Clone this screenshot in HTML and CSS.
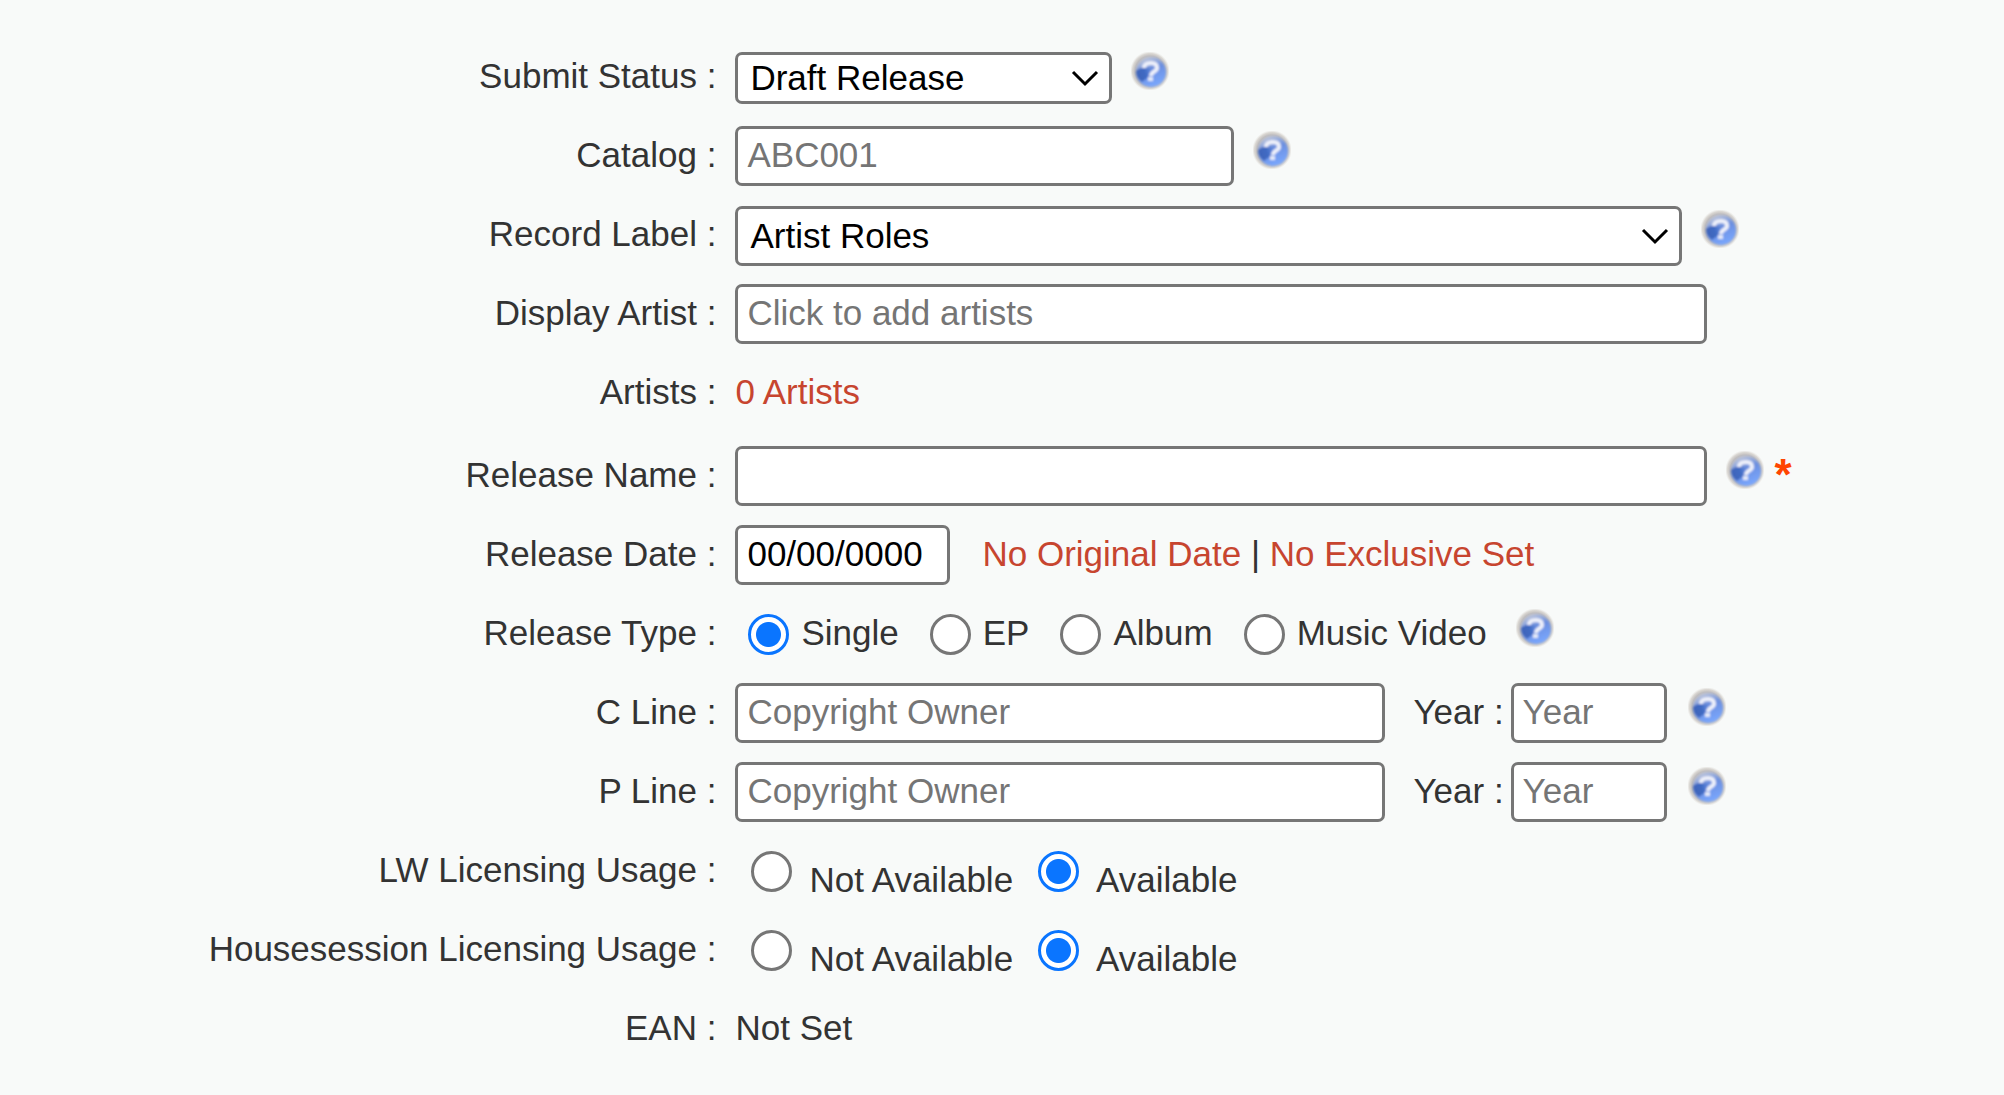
FILE: index.html
```
<!DOCTYPE html>
<html lang="en">
<head>
    <meta charset="UTF-8">
    <meta name="viewport" content="width=device-width, initial-scale=1.0">
    <title>Release Details</title>
    <link rel="stylesheet" href="styles.css">
</head>
<body>
    <!-- Shared icons -->
    <svg class="sprite" aria-hidden="true">
        <defs>
            <radialGradient id="rim">
                <stop offset="0.75" stop-color="#bfbcbc"/>
                <stop offset="0.88" stop-color="#d3cfca" stop-opacity="0.8"/>
                <stop offset="1" stop-color="#e6e3df" stop-opacity="0"/>
            </radialGradient>
            <linearGradient id="ball" x1="0.2" y1="0" x2="0.6" y2="1">
                <stop offset="0" stop-color="#cbcfdb"/>
                <stop offset="0.45" stop-color="#6c8fdf"/>
                <stop offset="1" stop-color="#7aa8ff"/>
            </linearGradient>
            <linearGradient id="shade" x1="0" y1="0.6" x2="1" y2="0.4">
                <stop offset="0" stop-color="#3d62b8"/>
                <stop offset="0.5" stop-color="#416bc4"/>
                <stop offset="1" stop-color="#5c87e0" stop-opacity="0"/>
            </linearGradient>
            <filter id="soft">
                <feGaussianBlur stdDeviation="0.8"/>
            </filter>
        </defs>
        <symbol id="help" viewBox="0 0 38 38">
            <circle cx="19" cy="19" r="20" fill="url(#rim)"/>
            <g filter="url(#soft)">
                <circle cx="20" cy="20" r="15" fill="url(#ball)"/>
                <path d="M5 19c5-5 12-3 20-3-2 6-8 9-14 14-4-3-6-7-6-11z" fill="url(#shade)"/>
                <path d="M13 16c0-4 3-5 7-5 4 0 6 2 6 5 0 4-6 3-6 8" fill="none" stroke="#eef0fa" stroke-width="4"/>
                <path d="M17 25h5v4h-5z" fill="#e4e9f8"/>
            </g>
        </symbol>
        <symbol id="chevron" viewBox="0 0 28 18">
            <path d="M2 3l12 12L26 3" fill="none" stroke="#000" stroke-width="3"/>
        </symbol>
    </svg>

    <form class="release-form">
        <div class="row">
            <label class="name" for="status">Submit Status :</label>
            <div class="field">
                <div class="select short">
                    <select id="status"><option>Draft Release</option></select>
                    <svg class="arrow"><use href="#chevron"/></svg>
                </div>
                <svg class="help"><use href="#help"/></svg>
            </div>
        </div>
        <div class="row">
            <label class="name" for="catalog">Catalog :</label>
            <div class="field">
                <input type="text" id="catalog" class="catalog" placeholder="ABC001">
                <svg class="help"><use href="#help"/></svg>
            </div>
        </div>
        <div class="row">
            <label class="name" for="recordLabel">Record Label :</label>
            <div class="field">
                <div class="select long">
                    <select id="recordLabel"><option>Artist Roles</option></select>
                    <svg class="arrow"><use href="#chevron"/></svg>
                </div>
                <svg class="help"><use href="#help"/></svg>
            </div>
        </div>
        <div class="row">
            <label class="name" for="displayArtist">Display Artist :</label>
            <div class="field">
                <input type="text" id="displayArtist" class="wide" placeholder="Click to add artists">
            </div>
        </div>
        <div class="row artists">
            <span class="name">Artists :</span>
            <div class="field">
                <a href="#" class="text">0 Artists</a>
            </div>
        </div>
        <div class="row">
            <label class="name" for="releaseName">Release Name :</label>
            <div class="field">
                <input type="text" id="releaseName" class="wide" required>
                <svg class="help"><use href="#help"/></svg>
                <span class="required">*</span>
            </div>
        </div>
        <div class="row">
            <label class="name" for="releaseDate">Release Date :</label>
            <div class="field">
                <input type="text" id="releaseDate" class="date" value="00/00/0000">
                <div class="text dates"><a href="#">No Original Date</a> | <a href="#">No Exclusive Set</a></div>
            </div>
        </div>
        <div class="row">
            <span class="name">Release Type :</span>
            <div class="field types">
                <label class="choice"><input type="radio" name="type" checked><span class="text">Single</span></label>
                <label class="choice"><input type="radio" name="type"><span class="text">EP</span></label>
                <label class="choice"><input type="radio" name="type"><span class="text">Album</span></label>
                <label class="choice"><input type="radio" name="type"><span class="text">Music Video</span></label>
                <svg class="help"><use href="#help"/></svg>
            </div>
        </div>
        <div class="row">
            <label class="name" for="cLine">C Line :</label>
            <div class="field">
                <input type="text" id="cLine" class="owner" placeholder="Copyright Owner">
                <label class="text year-label" for="cYear">Year :</label>
                <input type="text" id="cYear" class="year" placeholder="Year">
                <svg class="help"><use href="#help"/></svg>
            </div>
        </div>
        <div class="row">
            <label class="name" for="pLine">P Line :</label>
            <div class="field">
                <input type="text" id="pLine" class="owner" placeholder="Copyright Owner">
                <label class="text year-label" for="pYear">Year :</label>
                <input type="text" id="pYear" class="year" placeholder="Year">
                <svg class="help"><use href="#help"/></svg>
            </div>
        </div>
        <div class="row">
            <span class="name">LW Licensing Usage :</span>
            <div class="field licensing">
                <label class="choice"><input type="radio" name="lw"><span>Not Available</span></label>
                <label class="choice"><input type="radio" name="lw" checked><span>Available</span></label>
            </div>
        </div>
        <div class="row">
            <span class="name">Housesession Licensing Usage :</span>
            <div class="field licensing">
                <label class="choice"><input type="radio" name="housesession"><span>Not Available</span></label>
                <label class="choice"><input type="radio" name="housesession" checked><span>Available</span></label>
            </div>
        </div>
        <div class="row">
            <span class="name">EAN :</span>
            <div class="field">
                <span class="text">Not Set</span>
            </div>
        </div>
    </form>
</body>
</html>
```
FILE: styles.css
```
* {
    margin: 0;
    padding: 0;
    box-sizing: border-box;
}

body {
    font-family: "Liberation Sans", Arial, Helvetica, sans-serif;
    font-size: 35px;
    line-height: 40px;
    color: #333;
    background: #f8faf9;
}

a {
    color: #c7452f;
    text-decoration: none;
}

.sprite {
    position: absolute;
    width: 0;
    height: 0;
}

.release-form {
    padding-top: 38px;
}

.row {
    display: grid;
    grid-template-columns: 36% 1fr;
    column-gap: 14px;
    align-items: center;
    min-height: 79px;
}

.row.artists {
    margin-bottom: 4px;
}

.name {
    text-align: right;
    white-space: nowrap;
    padding: 0 5px 4px 0;
}

.field {
    display: flex;
    align-items: center;
    white-space: nowrap;
}

.text {
    padding-bottom: 4px;
}

/* Text boxes and drop-downs */
input[type="text"], select {
    font: inherit;
    color: #000;
    background: #fff;
    border: 3px solid #767676;
    border-radius: 7px;
}

input[type="text"] {
    height: 60px;
    margin-bottom: 2px;
    padding: 0 9px 2px;
}

input::placeholder {
    color: #757575;
    opacity: 1;
}

.catalog {
    width: 499px;
}

.wide {
    width: 972px;
}

.date {
    width: 215px;
}

.owner {
    width: 650px;
}

.year {
    width: 156px;
}

.select {
    position: relative;
}

.select select {
    appearance: none;
    display: block;
    width: 100%;
    height: 60px;
    padding: 0 48px 0 12px;
}

.select.short {
    width: 377px;
}

.select.short select {
    height: 52px;
}

.select.long {
    width: 947px;
}

.arrow {
    position: absolute;
    right: 13px;
    top: 50%;
    width: 28px;
    height: 18px;
    margin-top: -9px;
    pointer-events: none;
}

/* Side notes */
.help {
    flex: none;
    width: 38px;
    height: 38px;
    margin: 0 0 14px 19px;
}

.required {
    color: #ff4500;
    font-weight: bold;
    font-size: 44px;
    margin-left: 10px;
    padding-bottom: 4px;
}

.dates {
    margin-left: 32px;
}

.year-label {
    margin: 0 7px 0 28px;
}

.year + .help {
    margin-left: 21px;
}

/* Radio buttons */
.choice {
    display: flex;
    align-items: center;
}

input[type="radio"] {
    appearance: none;
    flex: none;
    width: 41px;
    height: 41px;
    border: 3px solid #767676;
    border-radius: 50%;
    background: #fff;
}

input[type="radio"]:checked {
    border-color: #0a75ff;
    background: radial-gradient(circle, #0a75ff 12px, #fff 13px);
}

.types {
    gap: 31px;
    padding-left: 13px;
}

.types .choice {
    gap: 12px;
}

.types .help {
    margin-left: -2px;
}

.licensing {
    gap: 25px;
    padding-left: 16px;
}

.licensing .choice {
    gap: 17px;
}

.licensing span {
    padding-top: 17px;
}
```
